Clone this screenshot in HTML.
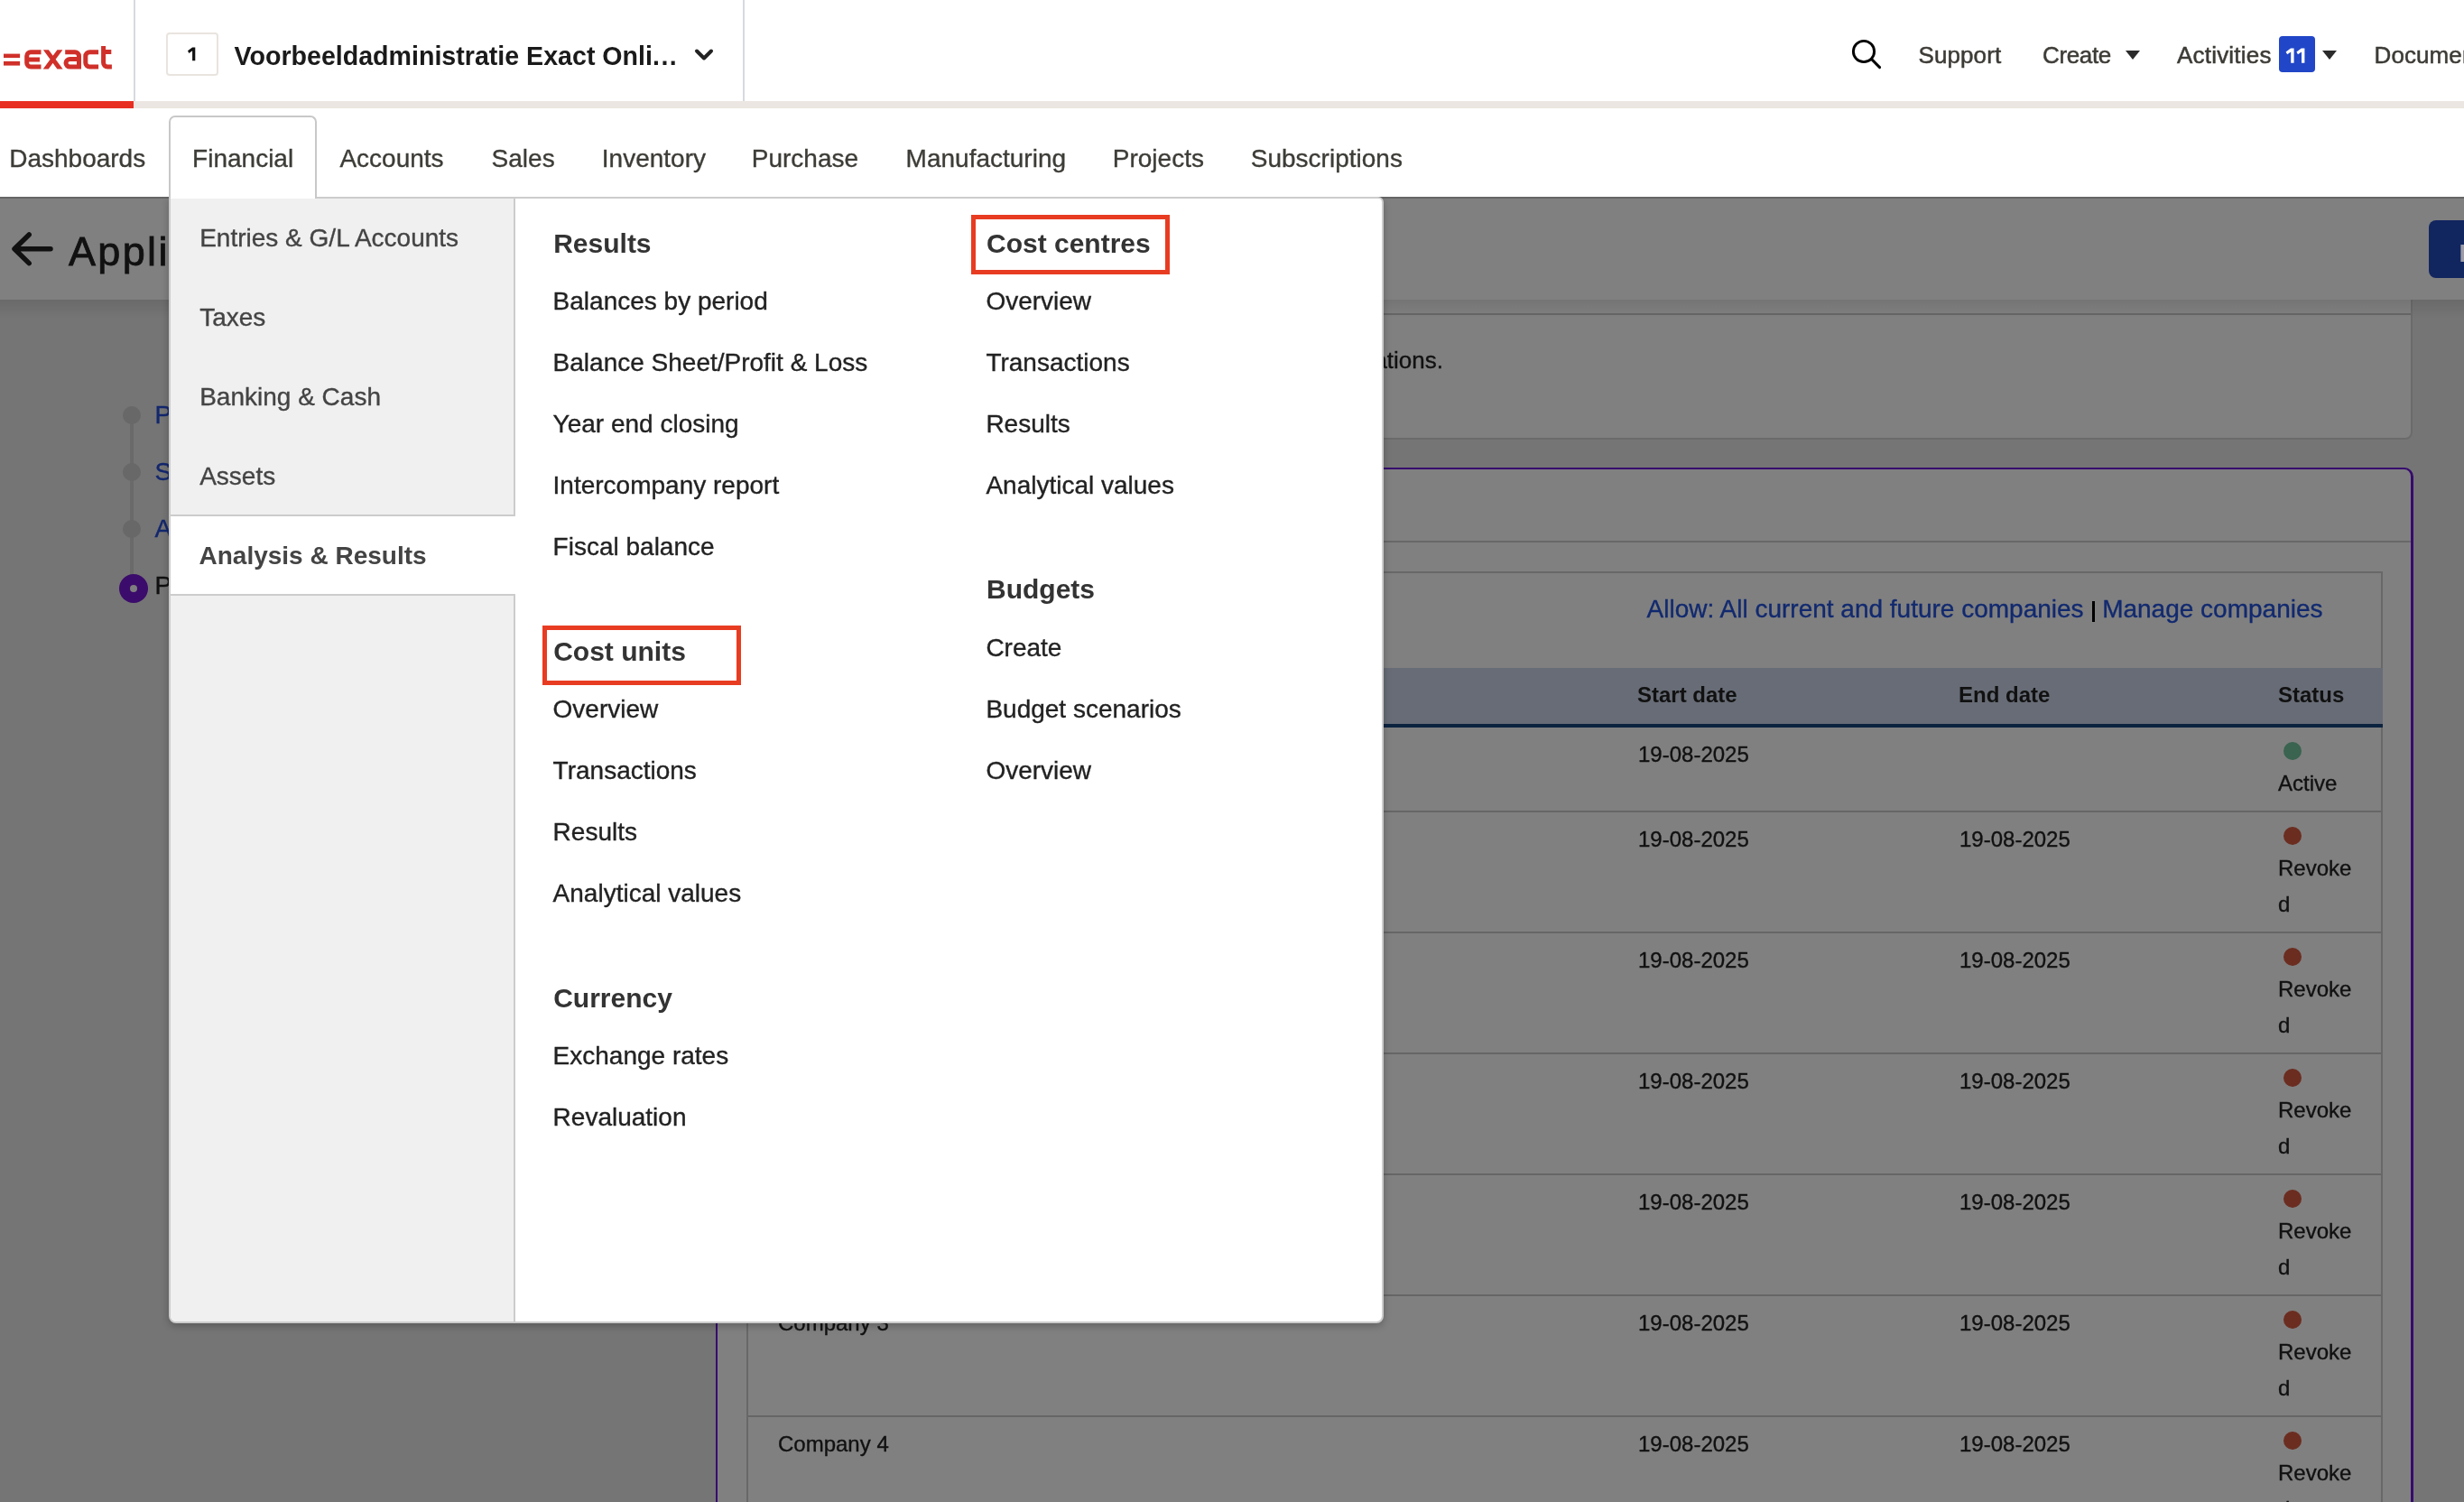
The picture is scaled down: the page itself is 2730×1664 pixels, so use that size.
<!DOCTYPE html>
<html><head><meta charset="utf-8"><title>Exact Online</title>
<style>
html,body{margin:0;padding:0;}
body{width:2730px;height:1664px;overflow:hidden;position:relative;background:#757575;font-family:"Liberation Sans",sans-serif;}
.t{position:absolute;white-space:nowrap;}
.r{position:absolute;box-sizing:border-box;}
svg{position:absolute;overflow:visible;}
#w{position:absolute;left:0;top:0;width:2730px;height:1664px;overflow:hidden;will-change:transform;}
</style></head><body><div id="w">
<div class="r" style="left:0px;top:218px;width:2730px;height:2px;background:#666;"></div>
<div class="r" style="left:700px;top:300px;width:1973px;height:187px;background:#808080;border:2px solid #6b6b6b;border-radius:8px;"></div>
<div class="r" style="left:702px;top:347px;width:1969px;height:2px;background:#666;"></div>
<div class="t" style="top:378.70px;font-size:26px;line-height:40px;color:#111;left:1522.4px;-webkit-text-stroke-width:0.35px;">ations.</div>
<div class="r" style="left:0px;top:220px;width:2730px;height:112px;background:#808080;"></div>
<div class="r" style="left:0px;top:332px;width:2730px;height:20px;background:linear-gradient(rgba(0,0,0,0.092),rgba(0,0,0,0));"></div>
<svg style="left:0;top:220px" width="200" height="112"><path d="M56 55.8H17 M32.2 40L16 55.8L32.2 71.6" fill="none" stroke="#111" stroke-width="5.5" stroke-linecap="round" stroke-linejoin="round"/></svg>
<div class="t" style="top:249.20px;font-size:45px;line-height:60px;color:#111;left:76px;letter-spacing:2.35px;-webkit-text-stroke:0.8px #111;">Appli</div>
<div class="r" style="left:2691px;top:244px;width:80px;height:64px;background:#11255f;border-radius:8px;"></div>
<div class="t" style="top:260.50px;font-size:28px;line-height:40px;color:#9c9ca6;left:2724.5px;font-weight:bold;">R</div>
<div class="r" style="left:144px;top:460px;width:4px;height:185px;background:#6a6a6a;"></div>
<div class="r" style="left:136px;top:450px;width:20px;height:20px;background:#686868;border-radius:50%;"></div>
<div class="r" style="left:136px;top:513px;width:20px;height:20px;background:#686868;border-radius:50%;"></div>
<div class="r" style="left:136px;top:576px;width:20px;height:20px;background:#686868;border-radius:50%;"></div>
<div class="r" style="left:132px;top:636px;width:32px;height:32px;background:#3b0c6b;border-radius:50%;"></div>
<div class="r" style="left:144px;top:648px;width:8px;height:8px;background:#7e7e7e;border-radius:50%;"></div>
<div class="t" style="top:439.50px;font-size:28px;line-height:40px;color:#13276e;left:171.5px;-webkit-text-stroke-width:0.35px;">P</div>
<div class="t" style="top:502.50px;font-size:28px;line-height:40px;color:#13276e;left:171.5px;-webkit-text-stroke-width:0.35px;">S</div>
<div class="t" style="top:565.50px;font-size:28px;line-height:40px;color:#13276e;left:171.5px;-webkit-text-stroke-width:0.35px;">A</div>
<div class="t" style="top:629.00px;font-size:28px;line-height:40px;color:#111;left:171.5px;-webkit-text-stroke-width:0.35px;">P</div>
<div class="r" style="left:793px;top:518px;width:1881px;height:1300px;background:#808080;border:2px solid #360b6e;border-right-width:3px;border-radius:10px;"></div>
<div class="r" style="left:795px;top:599px;width:1876px;height:2px;background:#686868;"></div>
<div class="r" style="left:827px;top:633px;width:1813px;height:1100px;background:#808080;border:2px solid #686868;"></div>
<div class="t" style="top:654.50px;font-size:28px;line-height:40px;color:#111;right:156.5px;-webkit-text-stroke-width:0.35px;"><span style="color:#11296f">Allow: All current and future companies</span><span style="display:inline-block;width:20.5px"></span><span style="color:#11296f">Manage companies</span></div>
<div class="r" style="left:2317.5px;top:666px;width:3.4px;height:23px;background:#000;"></div>
<div class="r" style="left:829px;top:740px;width:1811px;height:62px;background:#676c76;"></div>
<div class="r" style="left:829px;top:802px;width:1811px;height:4px;background:#0c2340;"></div>
<div class="t" style="top:749.50px;font-size:24px;line-height:40px;color:#111;left:1814px;font-weight:bold;">Start date</div>
<div class="t" style="top:749.50px;font-size:24px;line-height:40px;color:#111;left:2170px;font-weight:bold;">End date</div>
<div class="t" style="top:749.50px;font-size:24px;line-height:40px;color:#111;left:2524px;font-weight:bold;">Status</div>
<div class="r" style="left:829px;top:898px;width:1809px;height:2px;background:#666;"></div>
<div class="t" style="top:815.80px;font-size:24px;line-height:40px;color:#111;left:1815px;-webkit-text-stroke-width:0.35px;">19-08-2025</div>
<div class="r" style="left:2530px;top:822px;width:20px;height:20px;background:#3a6350;border-radius:50%;"></div>
<div class="t" style="top:847.50px;font-size:24px;line-height:40px;color:#111;left:2524px;-webkit-text-stroke-width:0.35px;">Active</div>
<div class="r" style="left:829px;top:1032px;width:1809px;height:2px;background:#666;"></div>
<div class="t" style="top:909.80px;font-size:24px;line-height:40px;color:#111;left:1815px;-webkit-text-stroke-width:0.35px;">19-08-2025</div>
<div class="t" style="top:909.80px;font-size:24px;line-height:40px;color:#111;left:2171px;-webkit-text-stroke-width:0.35px;">19-08-2025</div>
<div class="r" style="left:2530px;top:916px;width:20px;height:20px;background:#6b2d20;border-radius:50%;"></div>
<div class="t" style="top:941.50px;font-size:24px;line-height:40px;color:#111;left:2524px;-webkit-text-stroke-width:0.35px;">Revoke</div>
<div class="t" style="top:981.50px;font-size:24px;line-height:40px;color:#111;left:2524px;-webkit-text-stroke-width:0.35px;">d</div>
<div class="r" style="left:829px;top:1166px;width:1809px;height:2px;background:#666;"></div>
<div class="t" style="top:1043.80px;font-size:24px;line-height:40px;color:#111;left:1815px;-webkit-text-stroke-width:0.35px;">19-08-2025</div>
<div class="t" style="top:1043.80px;font-size:24px;line-height:40px;color:#111;left:2171px;-webkit-text-stroke-width:0.35px;">19-08-2025</div>
<div class="r" style="left:2530px;top:1050px;width:20px;height:20px;background:#6b2d20;border-radius:50%;"></div>
<div class="t" style="top:1075.50px;font-size:24px;line-height:40px;color:#111;left:2524px;-webkit-text-stroke-width:0.35px;">Revoke</div>
<div class="t" style="top:1115.50px;font-size:24px;line-height:40px;color:#111;left:2524px;-webkit-text-stroke-width:0.35px;">d</div>
<div class="r" style="left:829px;top:1300px;width:1809px;height:2px;background:#666;"></div>
<div class="t" style="top:1177.80px;font-size:24px;line-height:40px;color:#111;left:1815px;-webkit-text-stroke-width:0.35px;">19-08-2025</div>
<div class="t" style="top:1177.80px;font-size:24px;line-height:40px;color:#111;left:2171px;-webkit-text-stroke-width:0.35px;">19-08-2025</div>
<div class="r" style="left:2530px;top:1184px;width:20px;height:20px;background:#6b2d20;border-radius:50%;"></div>
<div class="t" style="top:1209.50px;font-size:24px;line-height:40px;color:#111;left:2524px;-webkit-text-stroke-width:0.35px;">Revoke</div>
<div class="t" style="top:1249.50px;font-size:24px;line-height:40px;color:#111;left:2524px;-webkit-text-stroke-width:0.35px;">d</div>
<div class="r" style="left:829px;top:1434px;width:1809px;height:2px;background:#666;"></div>
<div class="t" style="top:1311.80px;font-size:24px;line-height:40px;color:#111;left:1815px;-webkit-text-stroke-width:0.35px;">19-08-2025</div>
<div class="t" style="top:1311.80px;font-size:24px;line-height:40px;color:#111;left:2171px;-webkit-text-stroke-width:0.35px;">19-08-2025</div>
<div class="r" style="left:2530px;top:1318px;width:20px;height:20px;background:#6b2d20;border-radius:50%;"></div>
<div class="t" style="top:1343.50px;font-size:24px;line-height:40px;color:#111;left:2524px;-webkit-text-stroke-width:0.35px;">Revoke</div>
<div class="t" style="top:1383.50px;font-size:24px;line-height:40px;color:#111;left:2524px;-webkit-text-stroke-width:0.35px;">d</div>
<div class="r" style="left:829px;top:1568px;width:1809px;height:2px;background:#666;"></div>
<div class="t" style="top:1445.80px;font-size:24px;line-height:40px;color:#111;left:1815px;-webkit-text-stroke-width:0.35px;">19-08-2025</div>
<div class="t" style="top:1445.80px;font-size:24px;line-height:40px;color:#111;left:2171px;-webkit-text-stroke-width:0.35px;">19-08-2025</div>
<div class="t" style="top:1445.80px;font-size:24px;line-height:40px;color:#111;left:862px;-webkit-text-stroke-width:0.35px;">Company 3</div>
<div class="r" style="left:2530px;top:1452px;width:20px;height:20px;background:#6b2d20;border-radius:50%;"></div>
<div class="t" style="top:1477.50px;font-size:24px;line-height:40px;color:#111;left:2524px;-webkit-text-stroke-width:0.35px;">Revoke</div>
<div class="t" style="top:1517.50px;font-size:24px;line-height:40px;color:#111;left:2524px;-webkit-text-stroke-width:0.35px;">d</div>
<div class="r" style="left:829px;top:1702px;width:1809px;height:2px;background:#666;"></div>
<div class="t" style="top:1579.80px;font-size:24px;line-height:40px;color:#111;left:1815px;-webkit-text-stroke-width:0.35px;">19-08-2025</div>
<div class="t" style="top:1579.80px;font-size:24px;line-height:40px;color:#111;left:2171px;-webkit-text-stroke-width:0.35px;">19-08-2025</div>
<div class="t" style="top:1579.80px;font-size:24px;line-height:40px;color:#111;left:862px;-webkit-text-stroke-width:0.35px;">Company 4</div>
<div class="r" style="left:2530px;top:1586px;width:20px;height:20px;background:#6b2d20;border-radius:50%;"></div>
<div class="t" style="top:1611.50px;font-size:24px;line-height:40px;color:#111;left:2524px;-webkit-text-stroke-width:0.35px;">Revoke</div>
<div class="t" style="top:1651.50px;font-size:24px;line-height:40px;color:#111;left:2524px;-webkit-text-stroke-width:0.35px;">d</div>
<div class="r" style="left:187px;top:218px;width:1346px;height:1248px;background:#fff;border:2px solid #ccc;border-radius:0 6px 8px 8px;box-shadow:0 3px 9px rgba(0,0,0,0.24);"></div>
<div class="r" style="left:0px;top:0px;width:2730px;height:112px;background:#fff;"></div>
<div class="r" style="left:0px;top:112px;width:148px;height:8px;background:#e82e21;"></div>
<div class="r" style="left:148px;top:112px;width:2582px;height:8px;background:#ebe6e1;"></div>
<div class="r" style="left:148px;top:0px;width:2px;height:112px;background:#d6dade;"></div>
<div class="r" style="left:823px;top:0px;width:2px;height:112px;background:#d6dade;"></div>
<svg style="left:0;top:0" width="148" height="112" viewBox="0 0 148 112"><g fill="#d0302a"><rect x="4" y="59.6" width="18.1" height="4.5"/><rect x="4" y="67.9" width="18.1" height="4.7"/><path d="M47.9 55.3H53.9L69.6 76.6H63.4Z M63.4 55.3H69.4L53.7 76.6H47.7Z"/></g><g fill="none" stroke="#d0302a" stroke-width="5"><path d="M45.5 57.8H34A4.3 4.3 0 0 0 29.7 62.1V69.8A4.3 4.3 0 0 0 34 74.1H45.5M29.7 66.1H44"/><path d="M72.2 57.8H83A4.5 4.5 0 0 1 87.5 62.3V76.6M87.5 65.6H77.5A4.5 4.25 0 0 0 73 69.85A4.5 4.25 0 0 0 77.5 74.1H87.5"/><path d="M109.1 57.8H99.3A4.5 4.5 0 0 0 94.8 62.3V69.6A4.5 4.5 0 0 0 99.3 74.1H109.1"/><path d="M114.6 51.1V69.6A4.5 4.5 0 0 0 119.1 74.1H123.9M114.6 57.6H123.3"/></g></svg>
<div class="r" style="left:184px;top:36px;width:58px;height:48px;background:#fff;border:2px solid #e9e4de;border-radius:4px;"></div>
<svg style="left:200px;top:45px" width="30" height="30"><path d="M8 11.3L13.1 7.6H16.3V22.3H13.1V11.3L9.4 13.9Z" fill="#111"/></svg>
<div class="t" style="top:42.30px;font-size:28.6px;line-height:40px;color:#1a1a1a;left:259.5px;font-weight:bold;letter-spacing:0px;">Voorbeeldadministratie Exact Onli<span style="letter-spacing:1.5px">...</span></div>
<svg style="left:760px;top:40px" width="40" height="40"><path d="M12 16.5L20 24.5L28 16.5" fill="none" stroke="#222" stroke-width="4" stroke-linecap="round" stroke-linejoin="round"/></svg>
<svg style="left:2040px;top:30px" width="60" height="60"><circle cx="25" cy="27" r="11.6" fill="none" stroke="#000" stroke-width="2.9"/><path d="M33.4 35.4L42.6 44.6" stroke="#000" stroke-width="2.9" stroke-linecap="round"/></svg>
<div class="t" style="top:41.00px;font-size:26px;line-height:40px;color:#3d3b36;left:2125.5px;letter-spacing:0.1px;-webkit-text-stroke-width:0.5px;">Support</div>
<div class="t" style="top:41.00px;font-size:26px;line-height:40px;color:#3d3b36;left:2263px;letter-spacing:-0.35px;-webkit-text-stroke-width:0.5px;">Create</div>
<svg style="left:2355px;top:56px" width="16" height="10"><path d="M0 0H16L8 10Z" fill="#2b2b2b"/></svg>
<div class="t" style="top:41.00px;font-size:26px;line-height:40px;color:#3d3b36;left:2412px;letter-spacing:0.2px;-webkit-text-stroke-width:0.5px;">Activities</div>
<div class="r" style="left:2525px;top:40px;width:40px;height:40px;background:#2146c7;border-radius:4px;"></div>
<svg style="left:2525px;top:40px" width="40" height="40"><path d="M7.6 17.6L13 13.6H16.6V29.8H13.2V17.4L9.2 20.3Z M19.4 17.6L24.8 13.6H28.4V29.8H25V17.4L21 20.3Z" fill="#fff"/></svg>
<svg style="left:2573px;top:56px" width="16" height="10"><path d="M0 0H16L8 10Z" fill="#2b2b2b"/></svg>
<div class="t" style="top:41.00px;font-size:26px;line-height:40px;color:#3d3b36;left:2630.5px;letter-spacing:0.1px;-webkit-text-stroke-width:0.5px;">Documents</div>
<div class="r" style="left:0px;top:120px;width:2730px;height:98px;background:#fff;"></div>
<div class="t" style="top:155.80px;font-size:28px;line-height:40px;color:#3d3c37;left:10.200000000000001px;-webkit-text-stroke-width:0.35px;">Dashboards</div>
<div class="t" style="top:155.80px;font-size:28px;line-height:40px;color:#3d3c37;left:213.10000000000002px;-webkit-text-stroke-width:0.35px;">Financial</div>
<div class="t" style="top:155.80px;font-size:28px;line-height:40px;color:#3d3c37;left:376.40000000000003px;-webkit-text-stroke-width:0.35px;">Accounts</div>
<div class="t" style="top:155.80px;font-size:28px;line-height:40px;color:#3d3c37;left:544.5999999999999px;-webkit-text-stroke-width:0.35px;">Sales</div>
<div class="t" style="top:155.80px;font-size:28px;line-height:40px;color:#3d3c37;left:666.8px;-webkit-text-stroke-width:0.35px;">Inventory</div>
<div class="t" style="top:155.80px;font-size:28px;line-height:40px;color:#3d3c37;left:832.8px;-webkit-text-stroke-width:0.35px;">Purchase</div>
<div class="t" style="top:155.80px;font-size:28px;line-height:40px;color:#3d3c37;left:1003.5999999999999px;-webkit-text-stroke-width:0.35px;">Manufacturing</div>
<div class="t" style="top:155.80px;font-size:28px;line-height:40px;color:#3d3c37;left:1232.8px;-webkit-text-stroke-width:0.35px;">Projects</div>
<div class="t" style="top:155.80px;font-size:28px;line-height:40px;color:#3d3c37;left:1385.8px;-webkit-text-stroke-width:0.35px;">Subscriptions</div>
<div class="r" style="left:189px;top:220px;width:382px;height:1244px;background:#f0f0f0;border-right:2px solid #ccc;border-radius:0 0 0 6px;"></div>
<div class="r" style="left:189px;top:570px;width:380px;height:90px;background:#fff;border-top:2px solid #ccc;border-bottom:2px solid #ccc;"></div>
<div class="r" style="left:569px;top:572px;width:2px;height:86px;background:#fff;"></div>
<div class="r" style="left:187px;top:128px;width:164px;height:92px;background:#fff;border:2px solid #c8c8c8;border-bottom:none;border-radius:7px 7px 0 0;"></div>
<div class="t" style="top:155.80px;font-size:28px;line-height:40px;color:#3d3c37;left:213.1px;-webkit-text-stroke-width:0.35px;">Financial</div>
<div class="t" style="top:243.60px;font-size:28px;line-height:40px;color:#444;left:221.2px;-webkit-text-stroke-width:0.35px;">Entries &amp; G/L Accounts</div>
<div class="t" style="top:331.60px;font-size:28px;line-height:40px;color:#444;left:221.2px;-webkit-text-stroke-width:0.35px;">Taxes</div>
<div class="t" style="top:419.60px;font-size:28px;line-height:40px;color:#444;left:221.2px;-webkit-text-stroke-width:0.35px;">Banking &amp; Cash</div>
<div class="t" style="top:507.60px;font-size:28px;line-height:40px;color:#444;left:221.2px;-webkit-text-stroke-width:0.35px;">Assets</div>
<div class="t" style="top:595.60px;font-size:28px;line-height:40px;color:#444;left:220.5px;font-weight:bold;">Analysis &amp; Results</div>
<div class="t" style="top:249.50px;font-size:30px;line-height:40px;color:#333;left:613.2px;font-weight:bold;">Results</div>
<div class="t" style="top:313.50px;font-size:28px;line-height:40px;color:#222;left:612.6px;-webkit-text-stroke-width:0.35px;">Balances by period</div>
<div class="t" style="top:381.50px;font-size:28px;line-height:40px;color:#222;left:612.6px;-webkit-text-stroke-width:0.35px;">Balance Sheet/Profit &amp; Loss</div>
<div class="t" style="top:449.50px;font-size:28px;line-height:40px;color:#222;left:612.6px;-webkit-text-stroke-width:0.35px;">Year end closing</div>
<div class="t" style="top:517.50px;font-size:28px;line-height:40px;color:#222;left:612.6px;-webkit-text-stroke-width:0.35px;">Intercompany report</div>
<div class="t" style="top:585.50px;font-size:28px;line-height:40px;color:#222;left:612.6px;-webkit-text-stroke-width:0.35px;">Fiscal balance</div>
<div class="t" style="top:701.50px;font-size:30px;line-height:40px;color:#333;left:613.2px;font-weight:bold;">Cost units</div>
<div class="t" style="top:765.50px;font-size:28px;line-height:40px;color:#222;left:612.6px;-webkit-text-stroke-width:0.35px;">Overview</div>
<div class="t" style="top:833.50px;font-size:28px;line-height:40px;color:#222;left:612.6px;-webkit-text-stroke-width:0.35px;">Transactions</div>
<div class="t" style="top:901.50px;font-size:28px;line-height:40px;color:#222;left:612.6px;-webkit-text-stroke-width:0.35px;">Results</div>
<div class="t" style="top:969.50px;font-size:28px;line-height:40px;color:#222;left:612.6px;-webkit-text-stroke-width:0.35px;">Analytical values</div>
<div class="t" style="top:1085.50px;font-size:30px;line-height:40px;color:#333;left:613.2px;font-weight:bold;">Currency</div>
<div class="t" style="top:1149.50px;font-size:28px;line-height:40px;color:#222;left:612.6px;-webkit-text-stroke-width:0.35px;">Exchange rates</div>
<div class="t" style="top:1217.50px;font-size:28px;line-height:40px;color:#222;left:612.6px;-webkit-text-stroke-width:0.35px;">Revaluation</div>
<div class="t" style="top:249.50px;font-size:30px;line-height:40px;color:#333;left:1093.0px;font-weight:bold;">Cost centres</div>
<div class="t" style="top:313.50px;font-size:28px;line-height:40px;color:#222;left:1092.4px;-webkit-text-stroke-width:0.35px;">Overview</div>
<div class="t" style="top:381.50px;font-size:28px;line-height:40px;color:#222;left:1092.4px;-webkit-text-stroke-width:0.35px;">Transactions</div>
<div class="t" style="top:449.50px;font-size:28px;line-height:40px;color:#222;left:1092.4px;-webkit-text-stroke-width:0.35px;">Results</div>
<div class="t" style="top:517.50px;font-size:28px;line-height:40px;color:#222;left:1092.4px;-webkit-text-stroke-width:0.35px;">Analytical values</div>
<div class="t" style="top:633.00px;font-size:30px;line-height:40px;color:#333;left:1093.0px;font-weight:bold;">Budgets</div>
<div class="t" style="top:697.50px;font-size:28px;line-height:40px;color:#222;left:1092.4px;-webkit-text-stroke-width:0.35px;">Create</div>
<div class="t" style="top:765.50px;font-size:28px;line-height:40px;color:#222;left:1092.4px;-webkit-text-stroke-width:0.35px;">Budget scenarios</div>
<div class="t" style="top:833.50px;font-size:28px;line-height:40px;color:#222;left:1092.4px;-webkit-text-stroke-width:0.35px;">Overview</div>
<div class="r" style="left:1076.4px;top:238.4px;width:220px;height:66px;background:transparent;border:5px solid #e83c22;"></div>
<div class="r" style="left:600.6px;top:692.5px;width:220px;height:66px;background:transparent;border:5px solid #e83c22;"></div>
</div></body></html>
